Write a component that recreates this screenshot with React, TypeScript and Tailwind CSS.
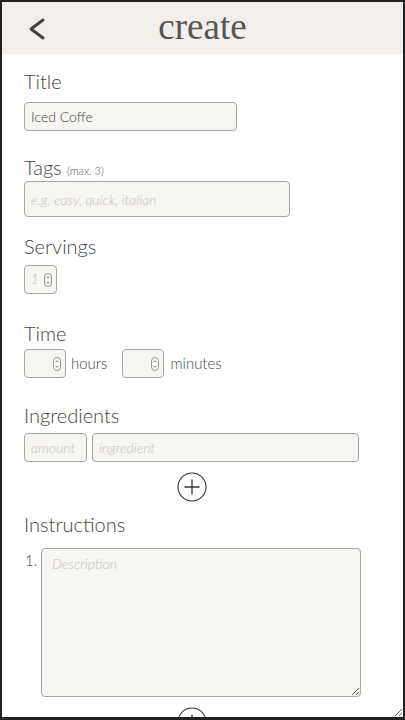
import React from "react";

const sans = "font-['Lato','Open_Sans',sans-serif] font-light";

function Spinner() {
  return (
    <svg width="8" height="14" viewBox="0 0 8 14" className="shrink-0">
      <rect x="0.5" y="0.5" width="7" height="13" rx="3.5" fill="#fbfaf8" stroke="#9a9894" />
      <path d="M2.5 5.2 L4 3.7 L5.5 5.2" fill="none" stroke="#777" strokeWidth="0.9" />
      <path d="M2.5 8.8 L4 10.3 L5.5 8.8" fill="none" stroke="#777" strokeWidth="0.9" />
    </svg>
  );
}

function NumberBox({ width, placeholder }: { width: string; placeholder?: string }) {
  return (
    <div
      className={`${width} h-[29px] flex items-center justify-between pl-[6px] pr-[4px] bg-[#f6f5f1] border border-[#a8a6a1] rounded-[4px]`}
    >
      <span className="text-[13px] italic text-[#c4c2bd]">{placeholder}</span>
      <Spinner />
    </div>
  );
}

function PlusButton() {
  return (
    <div className="flex justify-center">
      <svg width="30" height="30" viewBox="0 0 30 30">
        <circle cx="15" cy="15" r="14" fill="none" stroke="#333" strokeWidth="1.1" />
        <path d="M15 7.5 V22.5 M7.5 15 H22.5" stroke="#333" strokeWidth="1.3" />
      </svg>
    </div>
  );
}

const label = "text-[20px] leading-5 text-[#444]";
const field =
  "h-[29px] px-[6px] bg-[#f6f5f1] border border-[#a8a6a1] rounded-[4px] outline-none text-[14px] font-light text-[#444] placeholder:text-[#c4c2bd] placeholder:italic";

export default function App() {
  return (
    <div
      className={`w-[405px] h-[720px] border-2 border-b-[3px] border-[#222] overflow-hidden resize bg-white ${sans}`}
    >
      <header className="relative h-[52px] bg-[#f2efea] flex items-center justify-center">
        <button className="absolute left-[24px] top-[14px]">
          <svg width="22" height="26" viewBox="0 0 22 26">
            <path
              d="M17 4 L5 13 L17 22"
              fill="none"
              stroke="#444"
              strokeWidth="3"
              strokeLinecap="round"
              strokeLinejoin="round"
            />
          </svg>
        </button>
        <h1 className="font-['Liberation_Serif',serif] font-normal text-[37px] leading-[52px] text-[#555] pb-[3px]">
          create
        </h1>
      </header>

      <main className="pl-[22px]">
        <section className="mt-[17px]">
          <div className={label}>Title</div>
          <input className={`${field} mt-[11px] w-[213px]`} defaultValue="Iced Coffe" />
        </section>

        <section className="mt-[26px]">
          <div className={label}>
            Tags <span className="text-[11px] leading-none text-[#555]">(max. 3)</span>
          </div>
          <input
            className={`${field} mt-[4px] w-[266px] h-[36px] text-[13px]`}
            placeholder="e.g. easy, quick, italian"
          />
        </section>

        <section className="mt-[19px]">
          <div className={label}>Servings</div>
          <div className="mt-[9px]">
            <NumberBox width="w-[33px]" placeholder="1" />
          </div>
        </section>

        <section className="mt-[29px]">
          <div className={label}>Time</div>
          <div className="mt-[6px] flex items-center text-[15px] text-[#444]">
            <NumberBox width="w-[42px]" />
            <span className="ml-[5px] mr-[15px]">hours</span>
            <NumberBox width="w-[42px]" />
            <span className="ml-[6px]">minutes</span>
          </div>
        </section>

        <section className="mt-[27px] w-[335px]">
          <div className={label}>Ingredients</div>
          <div className="mt-[8px] flex gap-[5px]">
            <input className={`${field} w-[63px] text-[13px]`} placeholder="amount" />
            <input className={`${field} w-[267px] text-[13px]`} placeholder="ingredient" />
          </div>
          <div className="mt-[10px]">
            <PlusButton />
          </div>
        </section>

        <section className="mt-[12px] w-[340px]">
          <div className={label}>Instructions</div>
          <div className="mt-[14px] flex">
            <span className="w-[17px] shrink-0 pl-[1px] pt-[2px] text-[15px] leading-5 text-[#444]">1.</span>
            <textarea
              className="w-[320px] shrink-0 h-[149px] px-[10px] py-[4px] bg-[#f6f5f1] border border-[#a8a6a1] rounded-[4px] outline-none text-[14px] font-light text-[#444] placeholder:text-[#c4c2bd] placeholder:italic"
              placeholder="Description"
            />
          </div>
          <div className="mt-[10px] w-[335px]">
            <PlusButton />
          </div>
        </section>
      </main>
    </div>
  );
}
